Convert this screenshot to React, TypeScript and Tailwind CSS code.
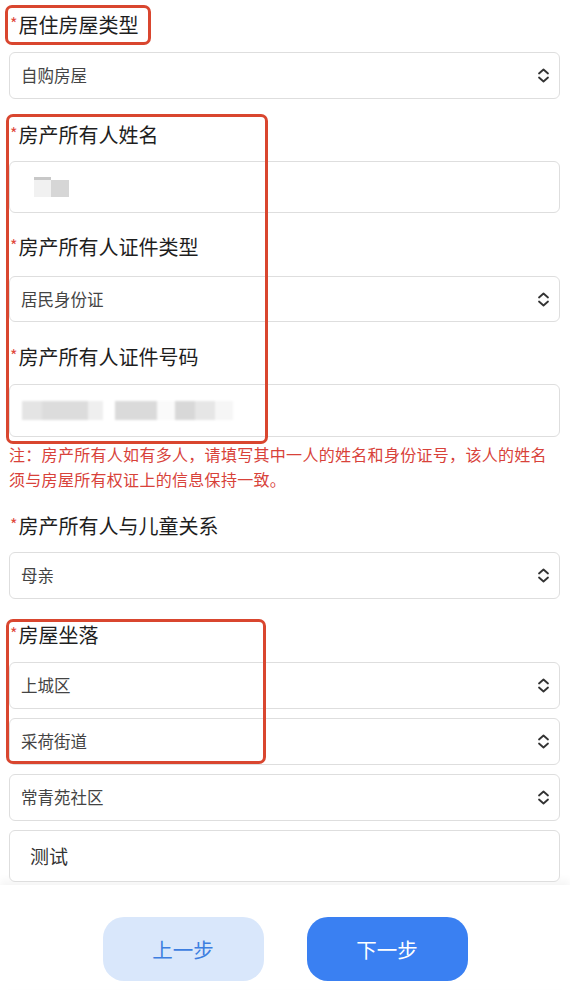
import type { ReactNode } from 'react';

const font = "font-['Noto_Sans_CJK_SC','Noto_Sans',sans-serif]";

function Label({ text, className }: { text: string; className: string }) {
  return (
    <div className={`flex items-center ${className}`}>
      <span className="flex items-start pl-[1px]">
        <span className="mr-[1px] mt-[2px] text-[16px] leading-[16px] text-[#e0483c]">*</span>
        <span className="text-[20px] leading-[24px] text-[#1e1e1e]">{text}</span>
      </span>
    </div>
  );
}

function Chevrons() {
  return (
    <svg width="13" height="15" viewBox="0 0 13 15" fill="none" stroke="#333" strokeWidth="1.8" strokeLinecap="round" strokeLinejoin="round">
      <path d="M2 5.5 L6.5 1.5 L11 5.5" />
      <path d="M2 9.5 L6.5 13.5 L11 9.5" />
    </svg>
  );
}

function SelectBox({ value, h }: { value: string; h: string }) {
  return (
    <div className={`flex items-center justify-between rounded-[6px] border border-[#dedede] bg-white pl-[11px] pr-[9px] ${h}`}>
      <span className="text-[16.5px] text-[#444]">{value}</span>
      <Chevrons />
    </div>
  );
}

function InputBox({ h, children }: { h: string; children?: ReactNode }) {
  return <div className={`flex items-center rounded-[6px] border border-[#dedede] bg-white ${h}`}>{children}</div>;
}

// mosaic blocks that hide personal data
const idBlocks: [number, string][] = [
  [20, '#e4e4e4'],
  [46, '#dcdcdc'],
  [15, '#efefef'],
  [12, '#ffffff'],
  [42, '#dadada'],
  [18, '#fafafa'],
  [20, '#d8d8d8'],
  [20, '#e6e6e6'],
  [18, '#f6f6f6'],
];

export default function App() {
  return (
    <div className={`relative h-[990px] w-[570px] overflow-hidden bg-white ${font}`}>
      <div className="pl-[9px] pr-[10px]">
        <Label text="居住房屋类型" className="h-[52px] pb-[2px]" />
        <SelectBox value="自购房屋" h="h-[47px]" />

        <Label text="房产所有人姓名" className="h-[62px] pt-[10px]" />
        <InputBox h="h-[52px]">
          <div className="ml-[24px] flex flex-col blur-[0.5px]">
            <div className="h-[3px] w-[17px] bg-[#c8c8c8]" />
            <div className="flex">
              <div className="h-[17px] w-[17px] bg-[#f1f1f1]" />
              <div className="h-[17px] w-[18px] bg-[#d6d6d6]" />
            </div>
          </div>
        </InputBox>

        <Label text="房产所有人证件类型" className="h-[63px] pt-[5px]" />
        <SelectBox value="居民身份证" h="h-[46px]" />

        <Label text="房产所有人证件号码" className="h-[62px] pt-[8px]" />
        <InputBox h="h-[53px]">
          <div className="ml-[12px] flex h-[19px] blur-[1px]">
            {idBlocks.map(([w, c], i) => (
              <div key={i} className="h-full" style={{ width: w, background: c }} />
            ))}
          </div>
        </InputBox>

        <p className="mt-[5px] text-[16px] leading-[25px] tracking-[0.3px] text-[#d8423a]">
          注：房产所有人如有多人，请填写其中一人的姓名和身份证号，该人的姓名须与房屋所有权证上的信息保持一致。
        </p>

        <Label text="房产所有人与儿童关系" className="h-[60px] pt-[8px]" />
        <SelectBox value="母亲" h="h-[47px]" />

        <Label text="房屋坐落" className="h-[63px] pt-[9px]" />
        <div className="flex flex-col gap-[9px]">
          <SelectBox value="上城区" h="h-[47px]" />
          <SelectBox value="采荷街道" h="h-[47px]" />
          <SelectBox value="常青苑社区" h="h-[47px]" />
          <InputBox h="h-[52px]">
            <span className="pl-[20px] text-[19px] text-[#333]">测试</span>
          </InputBox>
        </div>
      </div>

      <div className="mt-[3px] flex h-[104px] justify-center gap-[43px] bg-white pt-[32px] shadow-[0_-5px_8px_rgba(0,0,0,0.045)]">
        <button className="h-[64px] w-[161px] rounded-[21px] bg-[#d9e7fb] text-[20.5px] text-[#3d7ee0]">上一步</button>
        <button className="h-[64px] w-[161px] rounded-[21px] bg-[#3a80f2] text-[20.5px] text-white">下一步</button>
      </div>

      {/* red annotation frames drawn over the form */}
      <div className="pointer-events-none absolute left-[5px] top-[5px] h-[40px] w-[146px] rounded-[7px] border-[3px] border-[#d9462f]" />
      <div className="pointer-events-none absolute left-[6px] top-[114px] h-[330px] w-[262px] rounded-[7px] border-[3px] border-[#d9462f]" />
      <div className="pointer-events-none absolute left-[6px] top-[619px] h-[145px] w-[260px] rounded-[7px] border-[3px] border-[#d9462f]" />
    </div>
  );
}
